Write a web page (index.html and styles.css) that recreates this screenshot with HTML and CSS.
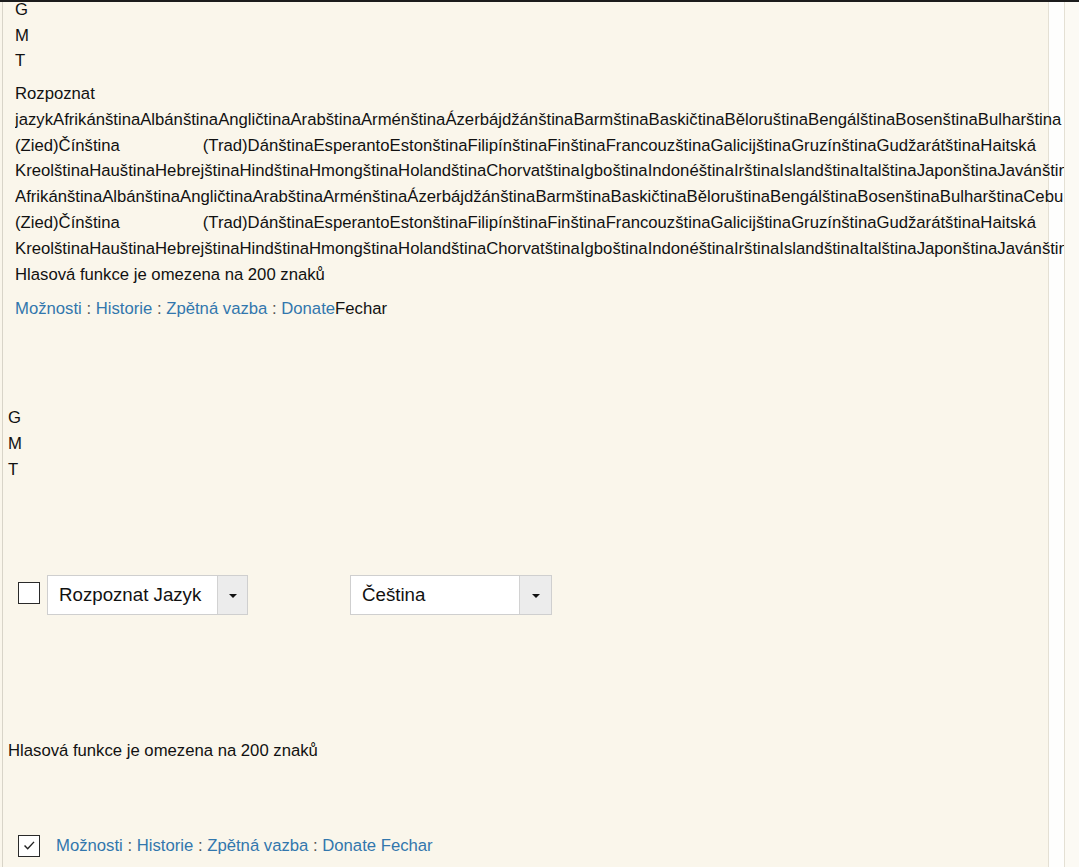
FILE: index.html
```html
<!DOCTYPE html>
<html lang="cs">
<head>
<meta charset="utf-8">
<title>GMT</title>
<link rel="stylesheet" href="styles.css">
</head>
<body>
<div class="page">
  <section class="top">
    <div class="gmt">
      <div>G</div>
      <div>M</div>
      <div>T</div>
    </div>
    <div class="list">
      <div class="line">Rozpoznat</div>
      <div class="line clip">jazykAfrikánštinaAlbánštinaAngličtinaArabštinaArménštinaÁzerbájdžánštinaBarmštinaBaskičtinaBěloruštinaBengálštinaBosenštinaBulharština</div>
      <div class="line just"><span>(Zied)Čínština</span><span>(Trad)DánštinaEsperantoEstonštinaFilipínštinaFinštinaFrancouzštinaGalicijštinaGruzínštinaGudžarátštinaHaitská</span></div>
      <div class="line clip">KreolštinaHauštinaHebrejštinaHindštinaHmongštinaHolandštinaChorvatštinaIgboštinaIndonéštinaIrštinaIslandštinaItalštinaJaponštinaJavánština</div>
      <div class="line clip">AfrikánštinaAlbánštinaAngličtinaArabštinaArménštinaÁzerbájdžánštinaBarmštinaBaskičtinaBěloruštinaBengálštinaBosenštinaBulharštinaCebu</div>
      <div class="line just"><span>(Zied)Čínština</span><span>(Trad)DánštinaEsperantoEstonštinaFilipínštinaFinštinaFrancouzštinaGalicijštinaGruzínštinaGudžarátštinaHaitská</span></div>
      <div class="line clip">KreolštinaHauštinaHebrejštinaHindštinaHmongštinaHolandštinaChorvatštinaIgboštinaIndonéštinaIrštinaIslandštinaItalštinaJaponštinaJavánština</div>
      <div class="line">Hlasová funkce je omezena na 200 znaků</div>
    </div>
    <div class="links"><a href="#">Možnosti</a><span class="sep"> : </span><a href="#">Historie</a><span class="sep"> : </span><a href="#">Zpětná vazba</a><span class="sep"> : </span><a href="#">Donate</a><span class="plain">Fechar</span></div>
  </section>

  <section class="bottom">
    <div class="gmt gmt2">
      <div>G</div>
      <div>M</div>
      <div>T</div>
    </div>
    <div class="controls">
      <span class="check"></span>
      <div class="select sel1">
        <span class="sel-text">Rozpoznat Jazyk</span>
        <span class="sel-arrow"><span class="tri"></span></span>
      </div>
      <div class="select sel2">
        <span class="sel-text">Čeština</span>
        <span class="sel-arrow"><span class="tri"></span></span>
      </div>
    </div>
    <div class="voice">Hlasová funkce je omezena na 200 znaků</div>
    <div class="footer">
      <span class="check checked"><svg viewBox="0 0 21 21" width="19" height="19"><path d="M5 10.5 L8.5 14 L15.5 6.5" fill="none" stroke="#222" stroke-width="1.6"/></svg></span>
      <div class="links links2"><a href="#">Možnosti</a><span class="sep"> : </span><a href="#">Historie</a><span class="sep"> : </span><a href="#">Zpětná vazba</a><span class="sep"> : </span><a href="#">Donate</a> <a href="#">Fechar</a></div>
    </div>
  </section>
</div>
</body>
</html>
```

FILE: styles.css
```css
html {
  margin: 0;
  min-height: 100%;
  background: linear-gradient(to right,
    #faf6eb 0, #faf6eb 2px,
    #d8d4c8 2px, #d8d4c8 3px,
    #faf6eb 3px, #faf6eb 1048px,
    #e4e0d4 1048px, #e4e0d4 1049px,
    #fefefd 1049px, #fefefd 1064px,
    #e4e0d4 1064px, #e4e0d4 1065px,
    #fcfaf4 1065px);
}

body {
  margin: 0;
  font-family: "Liberation Sans", Arial, sans-serif;
  font-size: 16.7px;
  color: #111;
  overflow: hidden;
}

.page {
  border-top: 2px solid #1c1c1c;
  min-height: 865px;
}

.top {
  padding-left: 15px;
}

.gmt {
  margin-top: -5px;
  line-height: 25.5px;
}

.list {
  margin-top: 7.5px;
  line-height: 25.8px;
  width: 1049px;
}

.line {
  white-space: nowrap;
}

.clip {
  overflow: hidden;
}

.just {
  display: flex;
  justify-content: space-between;
  width: 1021px;
}

.links {
  margin-top: 8.6px;
  line-height: 25.8px;
  white-space: nowrap;
}

.links a {
  color: #3277ad;
  text-decoration: none;
}

.sep {
  color: #555;
}

.plain {
  color: #111;
}

.bottom {
  padding-left: 8px;
}

.gmt2 {
  margin-top: 83px;
  line-height: 26px;
}

.controls {
  margin-top: 92px;
  display: flex;
  align-items: flex-start;
  height: 40px;
}

.check {
  box-sizing: border-box;
  width: 22px;
  height: 22px;
  border: 1px solid #2a2a2a;
  background: #fff;
  margin-left: 10px;
  margin-top: 7px;
  display: flex;
  align-items: center;
  justify-content: center;
  flex: none;
}

.select {
  box-sizing: border-box;
  height: 40px;
  border: 1px solid #cfcfcf;
  background: #fff;
  display: flex;
  align-items: stretch;
  font-size: 18.7px;
}

.sel1 {
  width: 201px;
  margin-left: 7px;
}

.sel2 {
  width: 202px;
  margin-left: 102px;
}

.sel-text {
  flex: 1;
  padding-left: 11px;
  display: flex;
  align-items: center;
  white-space: nowrap;
}

.sel-arrow {
  width: 29px;
  border-left: 1px solid #d2d2d2;
  background: #ececec;
  display: flex;
  align-items: center;
  justify-content: center;
}

.sel2 .sel-arrow {
  width: 31px;
}

.tri {
  width: 0;
  height: 0;
  border-left: 4.5px solid transparent;
  border-right: 4.5px solid transparent;
  border-top: 4.5px solid #111;
  margin-top: 3px;
}

.voice {
  margin-top: 123px;
  line-height: 26px;
}

.footer {
  margin-top: 71px;
  display: flex;
  align-items: center;
}

.footer .check {
  margin-top: 0;
}

.links2 {
  margin-top: 0;
  margin-left: 16px;
  line-height: 22px;
}
```
